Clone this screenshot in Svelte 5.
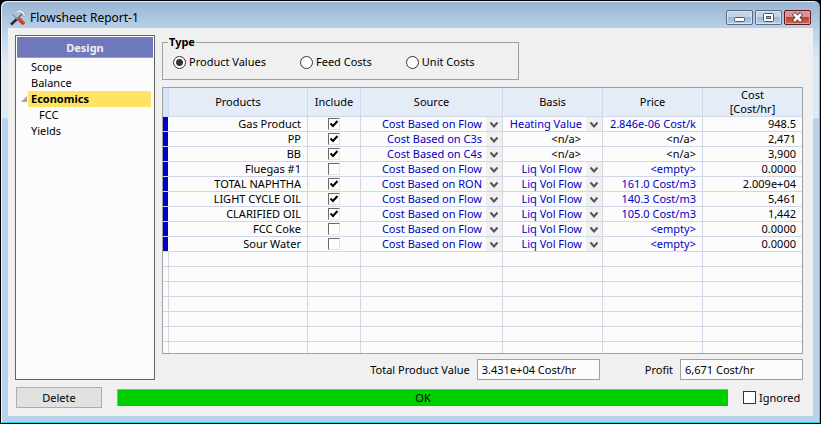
<script>
  let type = $state('Product Values');
  let ignored = $state(false);
  const types = ['Product Values', 'Feed Costs', 'Unit Costs'];
  const tree = [
    { name: 'Scope' },
    { name: 'Balance' },
    { name: 'Economics', open: true },
    { name: 'FCC', child: true },
    { name: 'Yields' }
  ];
  const rows = $state([
    { product: 'Gas Product', include: true, source: 'Cost Based on Flow', basis: 'Heating Value', price: '2.846e-06 Cost/k', cost: '948.5' },
    { product: 'PP', include: true, source: 'Cost Based on C3s', basis: null, price: null, cost: '2,471' },
    { product: 'BB', include: true, source: 'Cost Based on C4s', basis: null, price: null, cost: '3,900' },
    { product: 'Fluegas #1', include: false, source: 'Cost Based on Flow', basis: 'Liq Vol Flow', price: '<empty>', cost: '0.0000' },
    { product: 'TOTAL NAPHTHA', include: true, source: 'Cost Based on RON', basis: 'Liq Vol Flow', price: '161.0 Cost/m3', cost: '2.009e+04' },
    { product: 'LIGHT CYCLE OIL', include: true, source: 'Cost Based on Flow', basis: 'Liq Vol Flow', price: '140.3 Cost/m3', cost: '5,461' },
    { product: 'CLARIFIED OIL', include: true, source: 'Cost Based on Flow', basis: 'Liq Vol Flow', price: '105.0 Cost/m3', cost: '1,442' },
    { product: 'FCC Coke', include: false, source: 'Cost Based on Flow', basis: 'Liq Vol Flow', price: '<empty>', cost: '0.0000' },
    { product: 'Sour Water', include: false, source: 'Cost Based on Flow', basis: 'Liq Vol Flow', price: '<empty>', cost: '0.0000' }
  ]);
  const blanks = [0, 1, 2, 3, 4, 5, 6];
</script>

{#snippet picker(value, label)}
  <div class="picker">
    <select aria-label={label}><option>{value}</option></select>
    <svg class="arrow" viewBox="0 0 16 14" aria-hidden="true"><path d="M4.5 5.5l3.500 4 3.500-4" /></svg>
  </div>
{/snippet}

<main class="window">
  <header class="titlebar">
    <svg class="logo" viewBox="0 0 16 16" aria-hidden="true">
      <path d="M1 14.500L7 9" stroke="#252c35" stroke-width="2.600" />
      <path d="M6.500 9.500L12 4" stroke="#5c646c" stroke-width="1.500" />
      <path d="M7 2l3-.8 3 1.300 1.500 3" stroke="#8b97a3" stroke-width="2.800" />
      <path d="M7 2l3-.8 3 1.300 1.500 3" stroke="#f2f5f7" stroke-width="1.600" />
      <path d="M2.500 4.500l6 5" stroke="#8b97a3" stroke-width="1.500" />
      <path d="M8.500 8.500l5.500 5.500" stroke="#c62a20" stroke-width="3.600" />
      <path d="M9 8.500l5 5" stroke="#ee7c6a" />
    </svg>
    <h1>Flowsheet Report-1</h1>
    <div class="caption">
      <button aria-label="Minimize"><svg viewBox="0 0 25 13"><rect x="7.500" y="6.500" width="10" height="4" rx="1" fill="#fff" stroke="#4b5566" /></svg></button>
      <button aria-label="Maximize"><svg viewBox="0 0 25 13"><rect x="7.500" y="2.500" width="10" height="8" rx="1" fill="#fff" stroke="#4b5566" /><rect x="10.500" y="5.500" width="4" height="2" fill="#9db8d5" stroke="#4b5566" /></svg></button>
      <button class="close" aria-label="Close"><svg viewBox="0 0 25 13"><path d="M8.500 2.500l8 8M16.500 2.500l-8 8" stroke="#4b4050" stroke-width="4.500" /><path d="M9 3l7 7M16 3l-7 7" stroke="#fff" stroke-width="2.600" /></svg></button>
    </div>
  </header>

  <div class="client">
    <div class="body">
      <nav class="tree" aria-label="Design">
        <h2>Design</h2>
        <ul>
          {#each tree as item}
            <li class:open={item.open} class:child={item.child}>
              {#if item.open}<svg class="twisty" viewBox="0 0 6 6" aria-hidden="true"><path d="M6 0v6H0z" /></svg>{/if}
              <a href="#{item.name}">{item.name}</a>
            </li>
          {/each}
        </ul>
      </nav>

      <section class="content">
        <fieldset>
          <legend>Type</legend>
          {#each types as t}
            <label><input type="radio" name="type" value={t} bind:group={type} />{t}</label>
          {/each}
        </fieldset>

        <div class="grid">
          <table>
            <colgroup>
              <col class="c-mark" /><col class="c-product" /><col class="c-include" /><col class="c-source" />
              <col class="c-value" /><col class="c-value" /><col />
            </colgroup>
            <thead>
              <tr>
                <th class="mark"></th>
                <th>Products</th>
                <th>Include</th>
                <th>Source</th>
                <th>Basis</th>
                <th>Price</th>
                <th>Cost<br />[Cost/hr]</th>
              </tr>
            </thead>
            <tbody>
              {#each rows as row}
                <tr>
                  <td class="mark"></td>
                  <td>{row.product}</td>
                  <td class="tick"><input type="checkbox" bind:checked={row.include} aria-label="Include {row.product}" /></td>
                  <td class="pick">{@render picker(row.source, `Source of ${row.product}`)}</td>
                  {#if row.basis}
                    <td class="pick">{@render picker(row.basis, `Basis of ${row.product}`)}</td>
                  {:else}
                    <td class="none">&lt;n/a&gt;</td>
                  {/if}
                  {#if row.price}
                    <td class="price"><input type="text" bind:value={row.price} aria-label="Price of {row.product}" /></td>
                  {:else}
                    <td>&lt;n/a&gt;</td>
                  {/if}
                  <td>{row.cost}</td>
                </tr>
              {/each}
              {#each blanks as b}
                <tr><td></td><td></td><td></td><td></td><td></td><td></td><td></td></tr>
              {/each}
            </tbody>
          </table>
        </div>

        <div class="totals">
          <label for="total">Total Product Value</label>
          <input id="total" type="text" readonly value="3.431e+04 Cost/hr" />
          <label class="profit" for="profit">Profit</label>
          <input id="profit" type="text" readonly value="6,671 Cost/hr" />
        </div>
      </section>
    </div>

    <footer>
      <button class="delete">Delete</button>
      <div class="status" role="status">OK</div>
      <label><input type="checkbox" bind:checked={ignored} />Ignored</label>
    </footer>
  </div>
</main>

<style>
  :global(body) { background: #000; }
  :global(#app) { height: 100vh; }
  * { box-sizing: border-box; }
  h1, h2, ul, fieldset, legend { margin: 0; padding: 0; font-weight: 400; }
  .window {
    height: 100%;
    display: flex;
    flex-direction: column;
    padding: 0 6px 6px;
    border: 1px solid #000;
    border-radius: 7px 7px 0 0;
    box-shadow: inset 1px 1px #e8f4fc, inset -1px -1px #27d3ea;
    background: linear-gradient(#99b4d1, #b9d1ea 28px, #dceaf7 60px, #dceaf7 117px, #b9d1ea 118px);
    font: 11px/16px "Noto Sans", "Open Sans", sans-serif;
    color: #000;
  }
  button, input, select { font: inherit; color: inherit; margin: 0; }
  .titlebar { flex: none; height: 27px; display: flex; align-items: center; padding: 6px 3px 0 3px; }
  .logo { width: 16px; height: 16px; margin-right: 4px; fill: none; }
  h1 { flex: 1; font-size: 12px; line-height: 18px; }
  .caption { display: flex; gap: 2px; align-self: flex-start; padding-top: 3px; }
  .caption button {
    width: 27px;
    height: 15px;
    padding: 0;
    border: 1px solid #5a6b85;
    border-radius: 2px;
    box-shadow: inset 0 0 0 1px #d5e3f2;
    background: linear-gradient(#c3d4e8 50%, #9db7d5 50%, #b9d0e8);
  }
  .caption svg { display: block; width: 100%; height: 13px; }
  .caption .close { border-color: #5c1b22; box-shadow: inset 0 0 0 1px #e4a296; background: linear-gradient(#dc9488 50%, #c04030 50%, #cc6a50); }
  .client { flex: 1; min-height: 0; display: flex; flex-direction: column; gap: 7px; padding: 7px 10px 8px 7px; margin: 0 1px 1px; background: #f0f0f0; }
  .body { flex: 1; min-height: 0; display: flex; gap: 7px; }
  .tree { flex: none; width: 140px; border: 1px solid #646464; background: #fcfcfc; padding: 1px; }
  h2 { height: 21px; border-bottom: 1px solid #a0a0a0; background: #7078bc; color: #f0f0f0; font-size: 11px; font-weight: 700; line-height: 22px; text-align: center; }
  ul { list-style: none; padding: 1px 2px 0 11px; }
  li { position: relative; height: 16px; }
  a { display: block; padding-left: 3px; color: inherit; text-decoration: none; line-height: 16px; }
  .open { background: #ffe365; font-weight: 700; }
  .child { padding-left: 8px; }
  .twisty { position: absolute; left: -7px; top: 5px; width: 6px; height: 6px; fill: #a0a0a0; }
  .content { flex: 1; min-width: 0; display: flex; flex-direction: column; }
  fieldset { flex: none; width: 357px; height: 45px; display: flex; align-items: flex-start; gap: 34px; padding: 5px 10px 0; border: 1px solid #a0a0a0; }
  legend { margin-left: -5px; padding: 0 1px; line-height: 14px; font-weight: 700; }
  label { display: flex; align-items: center; gap: 3px; white-space: nowrap; }
  input[type="radio"], input[type="checkbox"] { appearance: none; flex: none; width: 13px; height: 13px; border: 1px solid #333; background: #fff; }
  input[type="radio"] { border-radius: 50%; }
  input[type="radio"]:checked { background: radial-gradient(#333 3px, #fff 4px); }
  footer input[type="checkbox"]:checked { background: #333; }
  .grid { flex: 1; min-height: 0; overflow: hidden; margin-top: 7px; border: 1px solid #a0a0a0; background: #fcfcfc; }
  table { width: 100%; table-layout: fixed; border-collapse: separate; border-spacing: 0; }
  .c-mark { width: 6px; }
  .c-product { width: 139px; }
  .c-include { width: 53px; }
  .c-source { width: 142px; }
  .c-value { width: 100px; }
  th { height: 29px; padding: 0; border: solid #d0d8e8; border-width: 0 1px 1px 0; background: #e4ecf7; font-weight: 400; line-height: 14px; }
  th.mark { background: #d5e4fa; }
  td { height: 15px; padding: 0 6px 0 0; border: solid #d0d8e8; border-width: 0 1px 1px 0; line-height: 14px; text-align: right; white-space: nowrap; }
  td:last-child, th:last-child { border-right: 0; }
  td.mark { padding: 0; border-right-color: #fcfcfc; background: #0000c8; background-clip: padding-box; }
  td.none { padding-right: 21px; }
  td.tick { padding: 0; text-align: center; }
  td.pick, td.price { padding: 0; color: #0000c8; }
  .tick input[type="checkbox"] { display: block; width: 12px; height: 12px; margin: 0 auto; border: 1px solid #e4e4e4; border-top-color: #696969; border-left-color: #696969; }
  .tick input[type="checkbox"]:checked {
    background: #fff url("data:image/svg+xml,%3Csvg xmlns='http://www.w3.org/2000/svg' viewBox='0 0 10 10'%3E%3Cpath d='M1.500 4.500l2.500 2.500 4.500-5' fill='none' stroke='%23000' stroke-width='2'/%3E%3C/svg%3E") center / 10px 10px;
  }
  .picker { position: relative; height: 14px; }
  select { appearance: none; display: block; width: 100%; height: 14px; padding: 0 20px 0 0; border: 0; background: none; line-height: 14px; text-align: right; text-align-last: right; }
  .arrow { position: absolute; top: 0; right: 0; width: 16px; height: 14px; background: #f0f0f0; fill: none; stroke: #555; stroke-width: 2; pointer-events: none; }
  .price input { display: block; width: 100%; height: 14px; padding: 0 6px 0 0; border: 0; background: none; line-height: 14px; text-align: right; }
  .totals { flex: none; display: flex; justify-content: flex-end; align-items: center; gap: 7px; padding-top: 5px; }
  .totals input { width: 123px; height: 21px; padding: 0 4px; border: 1px solid #a0a0a0; background: #fcfcfc; }
  .totals .profit { margin-left: 38px; }
  footer { flex: none; display: flex; align-items: center; gap: 15px; }
  footer label { width: 60px; }
  .delete { width: 86px; height: 21px; margin-left: 1px; padding: 0; border: 1px solid #adadad; background: #e1e1e1; }
  .status { flex: 1; height: 17px; border: solid #a0a0a0; border-width: 1px 0 0 1px; background: #00cf00; text-align: center; line-height: 16px; }
</style>
